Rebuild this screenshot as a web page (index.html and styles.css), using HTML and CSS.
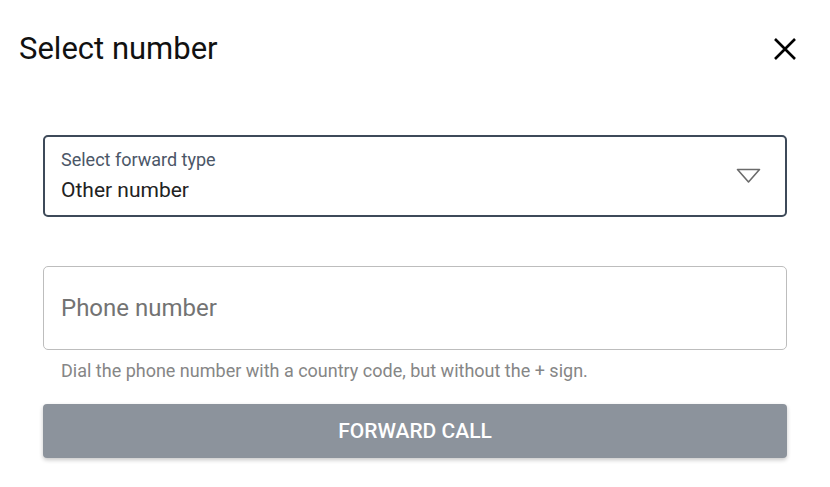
FILE: index.html
```html
<!DOCTYPE html>
<html lang="en">
<head>
<meta charset="utf-8">
<title>Select number</title>
<link rel="stylesheet" href="styles.css">
</head>
<body>
<div class="dialog">
  <header class="dialog-header">
    <h1 class="dialog-title">Select number</h1>
    <button class="close-btn" type="button" aria-label="Close">
      <svg width="24" height="24" viewBox="0 0 24 24"><path d="M2 2 L22 22 M22 2 L2 22" stroke="#000" stroke-width="2.6" fill="none"/></svg>
    </button>
  </header>
  <div class="dialog-body">
    <div class="select-field">
      <div class="select-text">
        <div class="select-label">Select forward type</div>
        <div class="select-value">Other number</div>
      </div>
      <svg class="select-arrow" width="25" height="16" viewBox="0 0 25 16"><path d="M1.5 1.5 H23.5 L12.5 14 Z" stroke="#6b6b6b" stroke-width="1.6" fill="none" stroke-linejoin="round"/></svg>
    </div>
    <div class="phone-group">
      <div class="text-field">
        <span class="placeholder">Phone number</span>
      </div>
      <div class="helper">Dial the phone number with a country code, but without the + sign.</div>
    </div>
    <button class="submit-btn" type="button">FORWARD CALL</button>
  </div>
</div>
</body>
</html>
```
FILE: styles.css
```css
html, body {
  margin: 0;
  padding: 0;
  background: #fff;
}
body {
  font-family: Roboto, "Noto Sans", Arial, sans-serif;
  color: #212121;
}
.dialog {
  width: 830px;
  height: 487px;
  box-sizing: border-box;
}
.dialog-header {
  display: flex;
  align-items: center;
  justify-content: space-between;
  padding: 31px 33px 0 19px;
}
.dialog-title {
  margin: 0;
  font-size: 31px;
  line-height: 36px;
  font-weight: 400;
  color: #111;
}
.close-btn {
  border: 0;
  background: none;
  padding: 0;
  width: 24px;
  height: 24px;
  display: flex;
}
.dialog-body {
  padding: 68px 43px 0 43px;
  display: flex;
  flex-direction: column;
}
.select-field {
  height: 82px;
  box-sizing: border-box;
  border: 2px solid #3e4a59;
  border-radius: 5px;
  display: flex;
  align-items: center;
  justify-content: space-between;
  padding: 0 24px 0 16px;
}
.select-text {
  display: flex;
  flex-direction: column;
  gap: 6px;
}
.select-label {
  font-size: 18px;
  line-height: 22px;
  color: #4b5667;
}
.select-value {
  font-size: 21px;
  line-height: 26px;
  color: #222;
}
.phone-group {
  margin-top: 49px;
  display: flex;
  flex-direction: column;
}
.text-field {
  height: 84px;
  box-sizing: border-box;
  border: 1px solid #bdbdbd;
  border-radius: 5px;
  display: flex;
  align-items: center;
  padding: 0 17px;
}
.placeholder {
  font-size: 24px;
  line-height: 28px;
  color: #737373;
}
.helper {
  margin-top: 10px;
  padding-left: 18px;
  font-size: 18px;
  line-height: 22px;
  color: #868686;
}
.submit-btn {
  margin-top: 22px;
  height: 54px;
  border: 0;
  border-radius: 4px;
  background: #8c939c;
  color: #fff;
  font-family: Roboto, "Noto Sans", Arial, sans-serif;
  font-size: 21px;
  font-weight: 500;
  letter-spacing: 0;
  box-shadow: 0 2px 4px rgba(0,0,0,0.22);
}
```
